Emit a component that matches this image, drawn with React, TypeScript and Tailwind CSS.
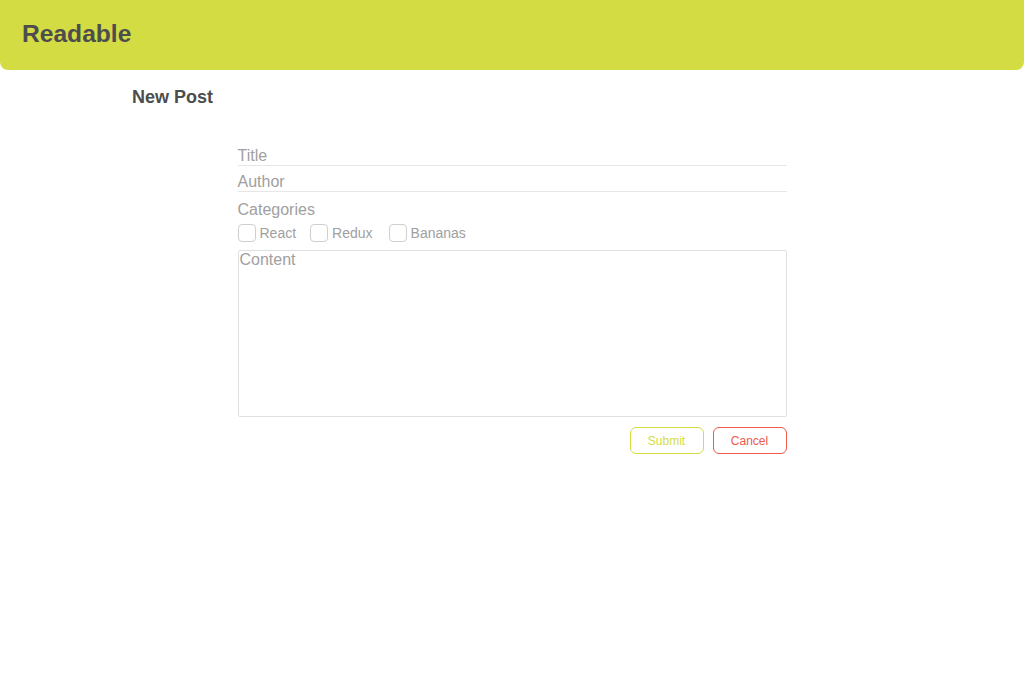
import React from "react";

const font = { fontFamily: '"Liberation Sans", Arial, sans-serif' };

function Check({ label, mr }: { label: string; mr: string }) {
  return (
    <label className={"flex items-center " + mr}>
      <span className="w-[18px] h-[18px] rounded-[4px] border border-[#cfcfcf] bg-white mr-[4px]" />
      <span className="text-[14px] leading-[18px] text-[#a0a0a0]">{label}</span>
    </label>
  );
}

export default function App() {
  return (
    <div className="min-h-[694px] bg-white" style={font}>
      <header className="h-[70px] bg-[#d4dc44] rounded-b-[8px] flex items-center px-[22px] pb-[2px]">
        <h1 className="text-[24.6px] font-bold text-[#4d4d4d] leading-none">Readable</h1>
      </header>
      <main className="px-[132px] pt-[13px]">
        <h2 className="text-[18px] leading-[28px] font-bold text-[#4d4d4d]">New Post</h2>
        <form className="w-[549px] mx-auto mt-[29px] flex flex-col">
          <div className="h-[26px] border-b border-[#e6e6e6] flex items-end text-[16px] leading-[18px] text-[#a0a0a0]">Title</div>
          <div className="h-[26px] border-b border-[#e6e6e6] flex items-end text-[16px] leading-[18px] text-[#a0a0a0]">Author</div>
          <div className="mt-[9px] text-[16px] leading-[18px] text-[#a0a0a0]">Categories</div>
          <div className="flex items-center mt-[5px]">
            <Check label="React" mr="mr-[14px]" />
            <Check label="Redux" mr="mr-[16px]" />
            <Check label="Bananas" mr="mr-0" />
          </div>
          <div className="mt-[8px] h-[167px] border border-[#e0e0e0] rounded-[2px] px-[1px] text-[16px] leading-[17px] text-[#a0a0a0]">Content</div>
          <div className="flex justify-end gap-[9px] mt-[10px]">
            <button type="button" className="w-[74px] h-[27px] rounded-[6px] border border-[#d4dc44] text-[12px] text-[#d4dc44] bg-white">Submit</button>
            <button type="button" className="w-[74px] h-[27px] rounded-[6px] border border-[#f0584a] text-[12px] text-[#f0584a] bg-white">Cancel</button>
          </div>
        </form>
      </main>
    </div>
  );
}
